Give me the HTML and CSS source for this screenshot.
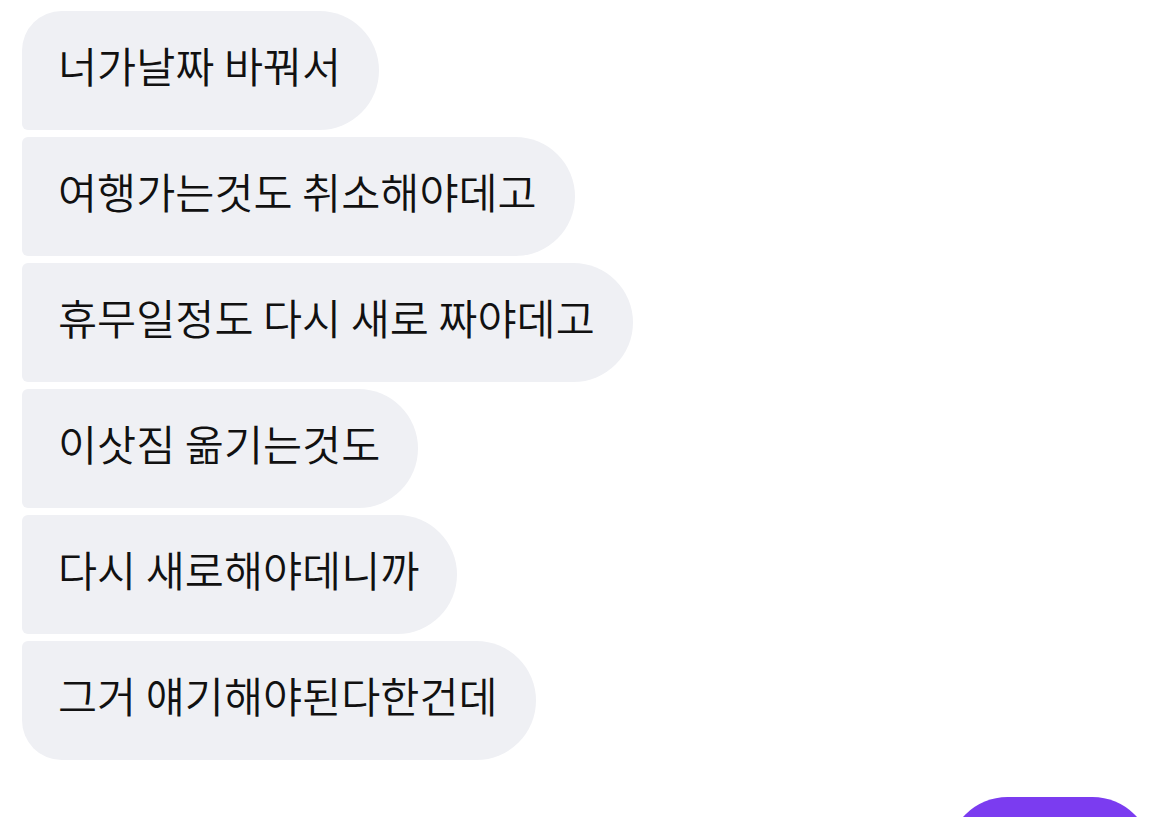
FILE: index.html
```html
<html>
<head>
    <title>Chat</title>
    <link rel="stylesheet" href="styles.css">
</head>
<body>
<div class="thread">
    <div class="bubble first">너가날짜 바꿔서</div>
    <div class="bubble">여행가는것도 취소해야데고</div>
    <div class="bubble">휴무일정도 다시 새로 짜야데고</div>
    <div class="bubble">이삿짐 옮기는것도</div>
    <div class="bubble">다시 새로해야데니까</div>
    <div class="bubble last">그거 얘기해야된다한건데</div>
    <div class="bubble mine"></div>
</div>
</body>
</html>
```

FILE: styles.css
```css
body {
    margin: 0;
    background-color: white;
    font-family: "Noto Sans CJK KR", "Noto Sans", sans-serif;
    overflow: hidden;
}
.thread {
    display: flex;
    flex-direction: column;
    align-items: flex-start;
    gap: 7px;
    padding: 11px 22px 0 22px;
    height: 817px;
    box-sizing: border-box;
}
.bubble {
    display: flex;
    align-items: center;
    flex-shrink: 0;
    height: 119px;
    box-sizing: border-box;
    padding: 0 38px 13px 36px;
    background-color: #eff0f4;
    color: #111;
    font-size: 42.5px;
    font-weight: 350;
    border-radius: 6px 60px 60px 6px;
    white-space: nowrap;
}
.bubble.first {
    border-top-left-radius: 40px;
}
.bubble.last {
    border-bottom-left-radius: 40px;
}
.bubble.mine {
    align-self: flex-end;
    margin-top: 30px;
    width: 204px;
    background-color: #7b3cf0;
    border-radius: 60px;
}
```
